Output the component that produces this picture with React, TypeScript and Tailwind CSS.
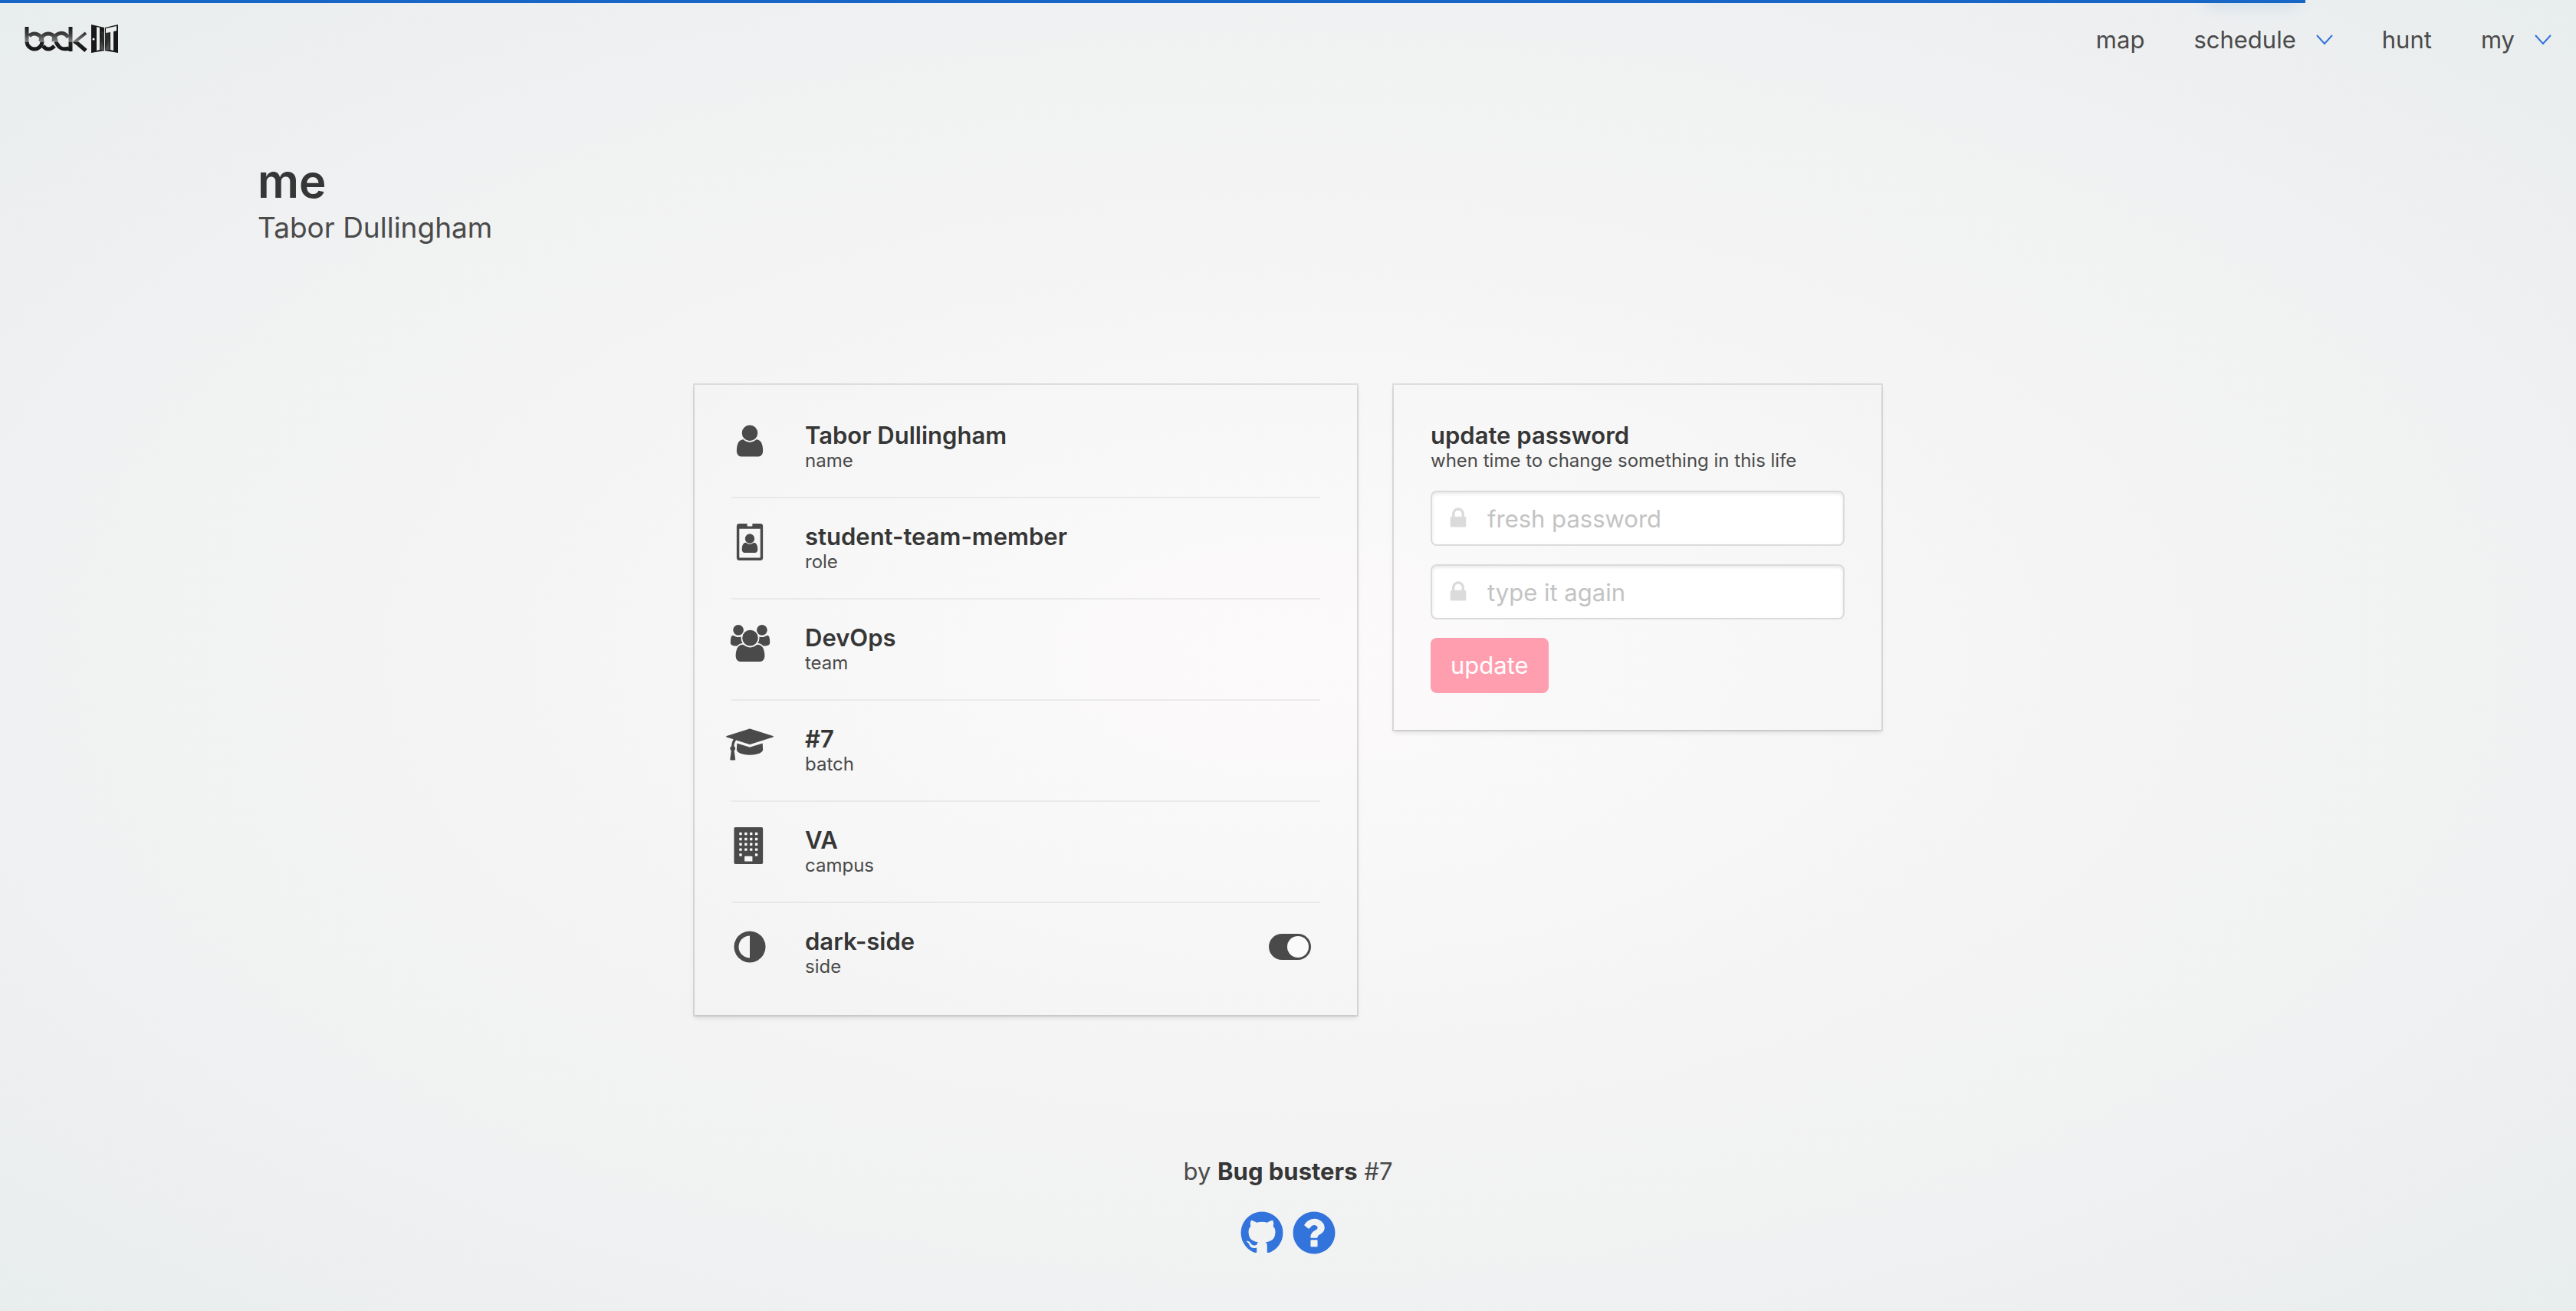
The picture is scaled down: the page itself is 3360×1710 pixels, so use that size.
import type { ReactNode } from "react";

const USER_PATH =
  "M1536 1399q0 109-62.5 187t-150.5 78h-854q-88 0-150.5-78t-62.5-187q0-85 8.5-160.5t31.5-152 58.5-131 94-89 134.5-34.5q131 128 313 128t313-128q76 0 134.5 34.5t94 89 58.5 131 31.5 152 8.5 160.5zm-256-887q0 159-112.5 271.5t-271.5 112.5-271.5-112.5-112.5-271.5 112.5-271.5 271.5-112.5 271.5 112.5 112.5 271.5z";
const USERS_PATH =
  "M657 896q-162 5-265 128h-134q-82 0-138-40.5t-56-118.5q0-353 124-353 6 0 43.5 21t97.5 42.5 119 21.5q67 0 133-23-5 37-5 66 0 139 81 256zm1071 637q0 120-73 189.5t-194 69.5h-874q-121 0-194-69.5t-73-189.5q0-53 3.5-103.5t14-109 26.5-108.5 43-97.5 62-81 85.5-53.5 111.5-20q10 0 43 21.5t73 48 107 48 135 21.5 135-21.5 107-48 73-48 43-21.5q61 0 111.5 20t85.5 53.5 62 81 43 97.5 26.5 108.5 14 109 3.5 103.5zm-1024-1277q0 106-75 181t-181 75-181-75-75-181 75-181 181-75 181 75 75 181zm704 384q0 159-112.5 271.5t-271.5 112.5-271.5-112.5-112.5-271.5 112.5-271.5 271.5-112.5 271.5 112.5 112.5 271.5zm576 225q0 78-56 118.5t-138 40.5h-134q-103-123-265-128 81-117 81-256 0-29-5-66 66 23 133 23 59 0 119-21.5t97.5-42.5 43.5-21q124 0 124 353zm-128-609q0 106-75 181t-181 75-181-75-75-181 75-181 181-75 181 75 75 181z";
const CAP_PATH =
  "M1774 836l18 316q4 69-82 128t-235 93.5-323 34.5-323-34.5-235-93.5-82-128l18-316 574 181q22 7 48 7t48-7zm530-324q0 23-22 31l-1120 352q-4 1-10 1t-10-1l-652-206q-43 34-71 111.5t-34 178.5q63 36 63 109 0 69-58 107l58 433q2 14-8 25-9 11-24 11h-192q-15 0-24-11-10-11-8-25l58-433q-58-38-58-107 0-73 65-111 11-207 98-330l-333-104q-22-8-22-31t22-31l1120-352q4-1 10-1t10 1l1120 352q22 8 22 31z";
const ADJUST_PATH =
  "M896 1440v-1088q-148 0-273 73t-198 198-73 273 73 273 198 198 273 73zm768-544q0 209-103 385.5t-279.5 279.5-385.5 103-385.5-103-279.5-279.5-103-385.5 103-385.5 279.5-279.5 385.5-103 385.5 103 279.5 279.5 103 385.5z";
const LOCK_PATH =
  "M640 768h512v-192q0-106-75-181t-181-75-181 75-75 181v192zm832 96v576q0 40-28 68t-68 28h-960q-40 0-68-28t-28-68v-576q0-40 28-68t68-28h32v-192q0-184 132-316t316-132 316 132 132 316v192h32q40 0 68 28t28 68z";
const GITHUB_PATH =
  "M896 128q209 0 385.5 103t279.5 279.5 103 385.5q0 251-146.5 451.5t-378.5 277.5q-27 5-40-7t-13-30q0-3 .5-76.5t.5-134.5q0-97-52-142 57-6 102.5-18t94-39 81-66.5 53-105 20.5-150.5q0-119-79-206 37-91-8-204-28-9-81 11t-92 44l-38 24q-93-26-192-26t-192 26q-16-11-42.5-27t-83.5-38.5-85-13.5q-45 113-8 204-79 87-79 206 0 85 20.5 150t52.5 105 80.5 67 94 39 102.5 18q-39 36-49 103-21 10-45 15t-57 5-65.5-21.5-55.5-62.5q-19-32-48.5-52t-49.5-24l-20-3q-21 0-29 4.5t-5 11.5 9 14 13 12l7 5q22 10 43.5 38t31.5 51l10 23q13 38 44 61.5t67 30 69.5 7 55.5-3.5l23-4q0 38 .5 88.5t.5 54.5q0 18-13 30t-40 7q-232-77-378.5-277.5t-146.5-451.5q0-209 103-385.5t279.5-279.5 385.5-103z";
const QUESTION_PATH =
  "M1024 1376v-192q0-14-9-23t-23-9h-192q-14 0-23 9t-9 23v192q0 14 9 23t23 9h192q14 0 23-9t9-23zm256-672q0-88-55.5-163t-138.5-116-170-41q-243 0-371 213-15 24 8 42l132 100q7 6 19 6 16 0 25-12 53-68 86-92 34-24 86-24 48 0 85.5 26t37.5 59q0 38-20 61t-68 45q-63 28-115.5 86.5t-52.5 125.5v36q0 14 9 23t23 9h192q14 0 23-9t9-23q0-19 21.5-49.5t54.5-49.5q32-18 49-28.5t46-35 44.5-48 28-60.5 12.5-81zm384 192q0 209-103 385.5t-279.5 279.5-385.5 103-385.5-103-279.5-279.5-103-385.5 103-385.5 279.5-279.5 385.5-103 385.5 103 279.5 279.5 103 385.5z";

function Glyph({ d, width = 1792, className }: { d: string; width?: number; className: string }) {
  return (
    <svg viewBox={`0 0 ${width} 1792`} className={className} fill="currentColor" aria-hidden="true">
      <path d={d} />
    </svg>
  );
}

function BadgeIcon() {
  return (
    <svg viewBox="0 0 1792 1792" className="h-12 w-12" fill="currentColor" aria-hidden="true">
      <path
        fillRule="evenodd"
        d="M384 0H768V96q0 32 32 32H992q32 0 32-32V0H1408q128 0 128 128V1664q0 128-128 128H384q-128 0-128-128V128Q256 0 384 0zM384 256V1632q0 32 32 32H1376q32 0 32-32V256z"
      />
      <path d={USER_PATH} transform="translate(358 422) scale(0.6)" />
    </svg>
  );
}

function BuildingIcon() {
  const windows = [2, 4, 6, 8, 10].flatMap((y) =>
    (y === 10 ? [3, 9] : [3, 5, 7, 9]).map((x) => ({ x, y })),
  );
  return (
    <svg viewBox="0 0 14 14" className="h-12 w-12" aria-hidden="true">
      <rect x="1" y="0" width="11" height="14" rx="0.5" fill="currentColor" />
      {windows.map(({ x, y }) => (
        <rect key={`${x}-${y}`} x={x} y={y} width="1" height="1" rx="0.2" fill="#f8f8f8" />
      ))}
      <rect x="5" y="11" width="3" height="2" rx="0.2" fill="#f8f8f8" />
    </svg>
  );
}

function Logo() {
  return (
    <svg viewBox="0 0 124 40" className="h-10 w-[124px]" role="img" aria-label="book IT">
      <defs>
        <linearGradient id="ink" gradientUnits="userSpaceOnUse" x1="0" y1="3" x2="0" y2="35">
          <stop offset="0" stopColor="#1c1c1c" />
          <stop offset="0.3" stopColor="#3c3c3c" />
          <stop offset="0.6" stopColor="#808080" />
          <stop offset="0.64" stopColor="#222" />
          <stop offset="1" stopColor="#141414" />
        </linearGradient>
        <linearGradient id="pane" x1="0" y1="0" x2="0" y2="1">
          <stop offset="0" stopColor="#1a1a1a" />
          <stop offset="0.9" stopColor="#8a8a8a" />
        </linearGradient>
      </defs>
      <g fill="none" stroke="url(#ink)" strokeWidth="5">
        <path d="M3 3V22A10 10 0 0 0 23 22A10 10 0 0 0 6 15" />
        <path d="M21 22A10 10 0 0 1 41 22Q42 26 45 28" />
        <path d="M38 22A10 10 0 0 1 57 17" />
        <path d="M24 28Q31 36 39 28" />
        <path d="M43 26Q47 34 58 31" />
        <path d="M60 3V35" />
        <path d="M80 11L64 24" strokeWidth="4" />
        <path d="M66 22L80 34" />
      </g>
      <path d="M87 0L104 4V34L87 37z" fill="#181818" />
      <path d="M122 0L105 4V34L122 37z" fill="#181818" />
      <path d="M99 9L104 31V9zM105 9V31L111 14V9z" fill="#2c2c2c" />
      <path d="M99 12L104 33L99 33zM111 12V33H105z" fill="url(#pane)" opacity="0.5" />
      <path d="M94 3L98 4V33L94 34z" fill="#eceeee" />
      <path d="M106 5L120 2V8L116 9V34L112 33V10L106 11z" fill="#eceeee" />
      <circle cx="90" cy="19" r="1.500" fill="#fff" />
    </svg>
  );
}

function Chevron() {
  return (
    <svg viewBox="0 0 22 14" className="h-[14px] w-[22px]" fill="none" stroke="#3273dc" strokeWidth="2" aria-hidden="true">
      <path d="M1 1L11 12L21 1" />
    </svg>
  );
}

function NavItem({ label, menu }: { label: string; menu?: boolean }) {
  return (
    <a href={`#${label}`} className="flex h-full items-center gap-[26px] px-8">
      {label}
      {menu && <Chevron />}
    </a>
  );
}

function Heading({ title, subtitle }: { title: string; subtitle: string }) {
  return (
    <div>
      <p className="text-[31px] leading-9 font-semibold text-[#363636]">{title}</p>
      <p className="text-[24px] leading-[30px]">{subtitle}</p>
    </div>
  );
}

function PasswordField({ id, label }: { id: string; label: string }) {
  return (
    <div className="relative mb-6">
      <label htmlFor={id} className="absolute h-px w-px opacity-0" aria-label={label} />
      <input
        id={id}
        type="password"
        placeholder={label}
        className="h-[72px] w-full rounded-lg border-2 border-[#dbdbdb] bg-white pr-6 pl-[72px] text-[31px] leading-[48px] text-[#363636] shadow-[inset_0_2px_4px_rgba(10,10,10,0.1)] placeholder:text-[#c3c3c3]"
      />
      <span className="pointer-events-none absolute inset-y-0 left-0 flex w-[72px] items-center justify-center text-[#dbdbdb]">
        <Glyph d={LOCK_PATH} className="h-8 w-8" />
      </span>
    </div>
  );
}

const ICON = "h-12 w-12";

const rows: { title: string; subtitle: string; icon: ReactNode; toggle?: boolean }[] = [
  { title: "Tabor Dullingham", subtitle: "name", icon: <Glyph d={USER_PATH} className={ICON} /> },
  { title: "student-team-member", subtitle: "role", icon: <BadgeIcon /> },
  { title: "DevOps", subtitle: "team", icon: <Glyph d={USERS_PATH} width={2048} className="h-12 w-[55px] shrink-0" /> },
  { title: "#7", subtitle: "batch", icon: <Glyph d={CAP_PATH} width={2304} className="h-12 w-[62px] shrink-0" /> },
  { title: "VA", subtitle: "campus", icon: <BuildingIcon /> },
  { title: "dark-side", subtitle: "side", icon: <Glyph d={ADJUST_PATH} className={ICON} />, toggle: true },
];

const CARD = "p-12 shadow-[0_4px_6px_rgba(10,10,10,0.1),0_0_0_2px_rgba(10,10,10,0.1)]";

export default function App() {
  return (
    <div className="min-h-screen overflow-hidden bg-[radial-gradient(ellipse,#fdfafb_0%,#f8f8f8_22%,#f3f3f3_50%,#f1f2f2_64%,#eeeff1_80%,#e8eded_100%)] font-['Inter',sans-serif] text-[31px] text-[#4a4a4a]">
      <div className="absolute top-0 left-0 h-1 w-[89.5%] bg-[#1867c6]" role="progressbar" aria-label="loading">
        <div className="absolute right-3 h-0.5 w-[116px] rounded-full shadow-[0_0_20px_#1867c6]" />
      </div>

      <nav className="flex h-[104px] items-center justify-between pl-8">
        <a href="#home">
          <Logo />
        </a>
        <div className="flex h-full">
          <NavItem label="map" />
          <NavItem label="schedule" menu />
          <NavItem label="hunt" />
          <NavItem label="my" menu />
        </div>
      </nav>

      <main className="px-[10%] pt-24">
        <h1 className="text-[60px] leading-[72px] font-semibold text-[#363636]">me</h1>
        <p className="text-[37px] leading-[50px]">Tabor Dullingham</p>

        <div className="mx-auto mt-[180px] grid max-w-[1548px] grid-cols-[864fr_636fr] items-start gap-12">
          <section className={CARD}>
            {rows.map((row) => (
              <div
                key={row.subtitle}
                className="flex items-start gap-12 border-b-2 border-[#dbdbdb]/50 py-8 first:pt-0 last:border-b-0 last:pb-0"
              >
                <div className="flex w-12 justify-center pt-px">{row.icon}</div>
                <div className="flex-1">
                  <Heading title={row.title} subtitle={row.subtitle} />
                </div>
                {row.toggle && (
                  <input
                    type="checkbox"
                    role="switch"
                    aria-label={row.title}
                    defaultChecked
                    className="mt-2 mr-3 flex h-[34px] w-[55px] appearance-none items-center justify-end rounded-full bg-[#4a4a4a] px-[3px] before:h-7 before:w-7 before:rounded-full before:bg-[#fafafa]"
                  />
                )}
              </div>
            ))}
          </section>

          <section className={CARD}>
            <Heading title="update password" subtitle="when time to change something in this life" />
            <form className="pt-6">
              <PasswordField id="fresh" label="fresh password" />
              <PasswordField id="again" label="type it again" />
              <button type="button" className="h-[72px] rounded-lg bg-[#ff9eaf] px-[26px] text-white">
                update
              </button>
            </form>
          </section>
        </div>
      </main>

      <footer className="mt-[180px] text-center">
        <p className="leading-[48px]">
          by <strong className="font-bold text-[#363636]">Bug busters</strong> #7
        </p>
        <div className="mt-6 flex justify-center gap-1 text-[#3273dc]">
          <a href="#github" aria-label="GitHub">
            <Glyph d={GITHUB_PATH} className="h-16 w-16" />
          </a>
          <a href="#help" aria-label="Help">
            <Glyph d={QUESTION_PATH} className="h-16 w-16" />
          </a>
        </div>
      </footer>
    </div>
  );
}
